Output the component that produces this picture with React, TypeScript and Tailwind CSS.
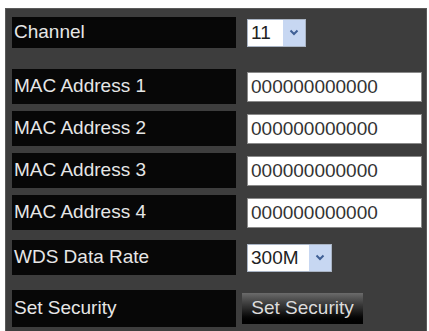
import React from "react";

const font = { fontFamily: '"Liberation Sans", Arial, sans-serif' };

function Chevron() {
  return (
    <svg width="10" height="7" viewBox="0 0 10 7">
      <path d="M1.5 1.5 L5 5 L8.5 1.5" fill="none" stroke="#3f5f95" strokeWidth="2" />
    </svg>
  );
}

function Select({ value, w }: { value: string; w: string }) {
  return (
    <div className={`flex h-[28px] ${w} items-center border border-[#a9b4c4] bg-white`}>
      <span className="flex-1 pl-[3px] text-[19px] leading-none text-[#222]">{value}</span>
      <span className="flex h-full w-[22px] items-center justify-center bg-[#c7d7f2]">
        <Chevron />
      </span>
    </div>
  );
}

function Label({ text, h }: { text: string; h: string }) {
  return (
    <div className={`flex ${h} w-[224px] items-center bg-[#070707] pl-[2px] text-[19px] text-[#e6e6e6]`}>
      {text}
    </div>
  );
}

function MacInput() {
  return (
    <div className="flex h-[30px] w-[175px] items-center border border-[#8a8a8a] bg-white pl-[3px] text-[19px] leading-none text-[#333]">
      000000000000
    </div>
  );
}

export default function App() {
  return (
    <div className="h-[331px] w-[429px] overflow-hidden bg-white" style={font}>
      <div className="ml-[5px] mt-[8px] h-[340px] w-[422px] border-l border-t border-r border-[#5a5a5a] bg-[#3d3d3d] pl-[6px] pt-[8px]">
        <div className="flex items-center gap-[11px]">
          <Label text="Channel" h="h-[31px]" />
          <Select value="11" w="w-[59px]" />
        </div>
        <div className="mt-[21px] flex flex-col gap-[7px]">
          {[1, 2, 3, 4].map((n) => (
            <div key={n} className="flex items-center gap-[11px]">
              <Label text={`MAC Address ${n}`} h="h-[35px]" />
              <MacInput />
            </div>
          ))}
        </div>
        <div className="mt-[10px] flex items-center gap-[11px]">
          <Label text="WDS Data Rate" h="h-[35px]" />
          <Select value="300M" w="w-[85px]" />
        </div>
        <div className="mt-[15px] flex items-center gap-[6px]">
          <Label text="Set Security" h="h-[37px]" />
          <div className="flex h-[31px] w-[121px] items-center justify-center bg-gradient-to-b from-[#6b6b6b] via-[#2a2a2a] to-[#000] text-[19px] text-[#dcdcdc]">
            Set Security
          </div>
        </div>
      </div>
    </div>
  );
}
